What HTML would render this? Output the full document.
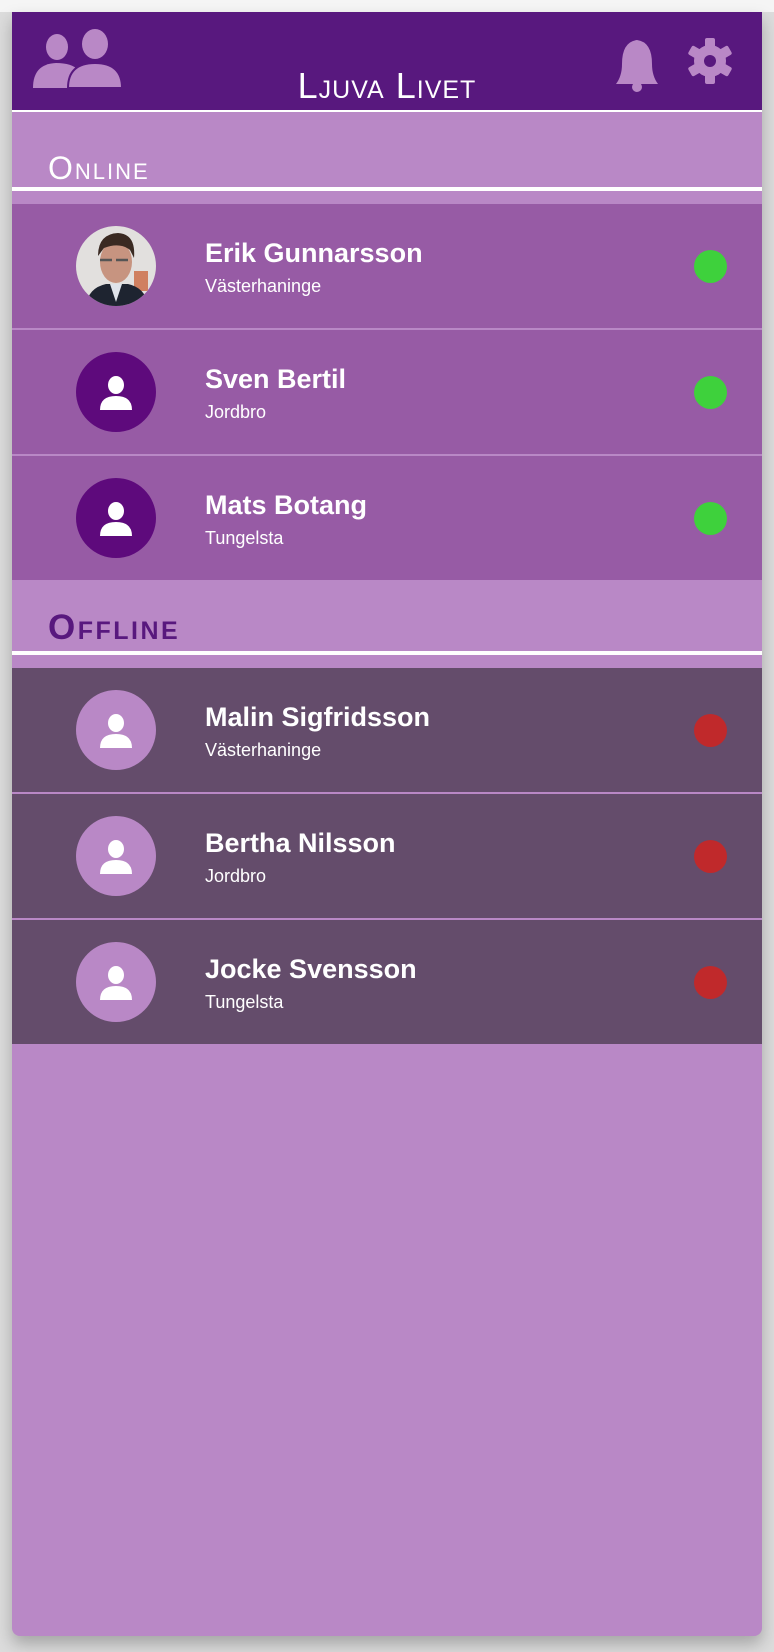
<!DOCTYPE html>
<html><head><meta charset="utf-8"><style>
html,body{margin:0;padding:0}
body{width:774px;height:1652px;background:#dcdcdc;position:relative;overflow:hidden;font-family:"Liberation Sans",sans-serif}
.top{position:absolute;left:0;top:0;width:774px;height:12px;background:#f5f5f5}
.app{position:absolute;left:12px;top:12px;width:750px;height:1624px;background:#b988c6;border-radius:0 0 8px 8px;box-shadow:0 8px 16px rgba(0,0,0,.25);overflow:hidden}
.hdr{position:absolute;left:0;top:0;width:750px;height:98px;background:#58187e;border-bottom:2px solid #fff}
.title{position:absolute;left:0;width:750px;top:56px;text-align:center;color:#fff;font-family:"Liberation Sans",sans-serif;font-variant:small-caps;font-size:36px;line-height:36px;letter-spacing:1px}
.sec{position:absolute;left:36px;font-family:"Liberation Sans",sans-serif;font-variant:small-caps;font-size:32px;line-height:32px;letter-spacing:2px}
.line{position:absolute;left:0;width:750px;height:4px;background:#fff}
.row{position:absolute;left:0;width:750px;height:124px}
.av{position:absolute;left:64px;top:22px;width:80px;height:80px;border-radius:50%;overflow:hidden}
.nm{position:absolute;left:193px;top:34px;color:#fff;font-weight:bold;font-size:27px;line-height:30px}
.sb{position:absolute;left:193px;top:71px;color:#fff;font-size:18px;line-height:22px}
.dot{position:absolute;left:682px;top:46px;width:33px;height:33px;border-radius:50%}
</style></head><body>
<div class="top"></div>
<div class="app">
 <div class="hdr">
  <svg style="position:absolute;left:0;top:0" width="750" height="98">
   <g fill="#b988c6">
    <ellipse cx="45" cy="35" rx="11" ry="13"/>
    <path d="M21 76 Q21 52 44 51 Q60 51 66 58 L64 76 Z"/>
    <ellipse cx="83" cy="32" rx="13" ry="15"/>
    <path d="M56 76 Q56 51 83 51 Q110 51 110 76 Z" stroke="#58187e" stroke-width="2"/>
    <path d="M604 72 Q610 64 610 52 Q610 30 625 28 Q640 30 640 52 Q640 64 646 72 Z"/>
    <circle cx="625" cy="75" r="5"/>
   </g>
   <g transform="translate(698,49)" fill="#b988c6">
    <circle r="16"/>
    <g><rect x="-5" y="-23" width="10" height="46" rx="2"/><rect x="-5" y="-23" width="10" height="46" rx="2" transform="rotate(60)"/><rect x="-5" y="-23" width="10" height="46" rx="2" transform="rotate(120)"/></g>
    <circle r="6" fill="#58187e"/>
   </g>
  </svg>
  <div class="title">Ljuva Livet</div>
 </div>
 <div class="sec" style="top:140px;color:#fff">Online</div>
 <div class="line" style="top:175px"></div>

 <div class="row" style="top:192px;background:#975ba5">
  <div class="av"><svg width="80" height="80"><rect width="80" height="80" fill="#e2e0de"/><rect x="58" y="45" width="14" height="20" fill="#d08060"/><path d="M10 80 Q12 62 30 58 L52 58 Q70 62 72 80Z" fill="#1e2430"/><path d="M34 58 L40 76 L46 58Z" fill="#dfe3ea"/><ellipse cx="40" cy="36" rx="16" ry="21" fill="#c79480"/><path d="M22 30 Q22 8 42 7 Q60 8 58 32 L54 24 Q44 16 28 22Z" fill="#3a2a22"/><path d="M24 34 h12 M40 34 h12" stroke="#555" stroke-width="2.5"/></svg></div>
  <div class="nm">Erik Gunnarsson</div><div class="sb">Västerhaninge</div>
  <div class="dot" style="background:#3ed13c"></div>
 </div>
 <div class="row" style="top:318px;background:#975ba5">
  <div class="av" style="background:#5e0a7c"><svg width="80" height="80" fill="#fff"><ellipse cx="40" cy="33" rx="8" ry="9"/><path d="M24 58 Q24 44 40 44 Q56 44 56 58Z"/></svg></div>
  <div class="nm">Sven Bertil</div><div class="sb">Jordbro</div>
  <div class="dot" style="background:#3ed13c"></div>
 </div>
 <div class="row" style="top:444px;background:#975ba5">
  <div class="av" style="background:#5e0a7c"><svg width="80" height="80" fill="#fff"><ellipse cx="40" cy="33" rx="8" ry="9"/><path d="M24 58 Q24 44 40 44 Q56 44 56 58Z"/></svg></div>
  <div class="nm">Mats Botang</div><div class="sb">Tungelsta</div>
  <div class="dot" style="background:#3ed13c"></div>
 </div>

 <div class="sec" style="top:598px;color:#58187e;font-weight:bold;font-size:35px;line-height:35px;letter-spacing:2.5px">Offline</div>
 <div class="line" style="top:639px"></div>

 <div class="row" style="top:656px;background:#644c6b">
  <div class="av" style="background:#b988c6"><svg width="80" height="80" fill="#fff"><ellipse cx="40" cy="33" rx="8" ry="9"/><path d="M24 58 Q24 44 40 44 Q56 44 56 58Z"/></svg></div>
  <div class="nm">Malin Sigfridsson</div><div class="sb">Västerhaninge</div>
  <div class="dot" style="background:#c0292b"></div>
 </div>
 <div class="row" style="top:782px;background:#644c6b">
  <div class="av" style="background:#b988c6"><svg width="80" height="80" fill="#fff"><ellipse cx="40" cy="33" rx="8" ry="9"/><path d="M24 58 Q24 44 40 44 Q56 44 56 58Z"/></svg></div>
  <div class="nm">Bertha Nilsson</div><div class="sb">Jordbro</div>
  <div class="dot" style="background:#c0292b"></div>
 </div>
 <div class="row" style="top:908px;background:#644c6b">
  <div class="av" style="background:#b988c6"><svg width="80" height="80" fill="#fff"><ellipse cx="40" cy="33" rx="8" ry="9"/><path d="M24 58 Q24 44 40 44 Q56 44 56 58Z"/></svg></div>
  <div class="nm">Jocke Svensson</div><div class="sb">Tungelsta</div>
  <div class="dot" style="background:#c0292b"></div>
 </div>
</div>
</body></html>
